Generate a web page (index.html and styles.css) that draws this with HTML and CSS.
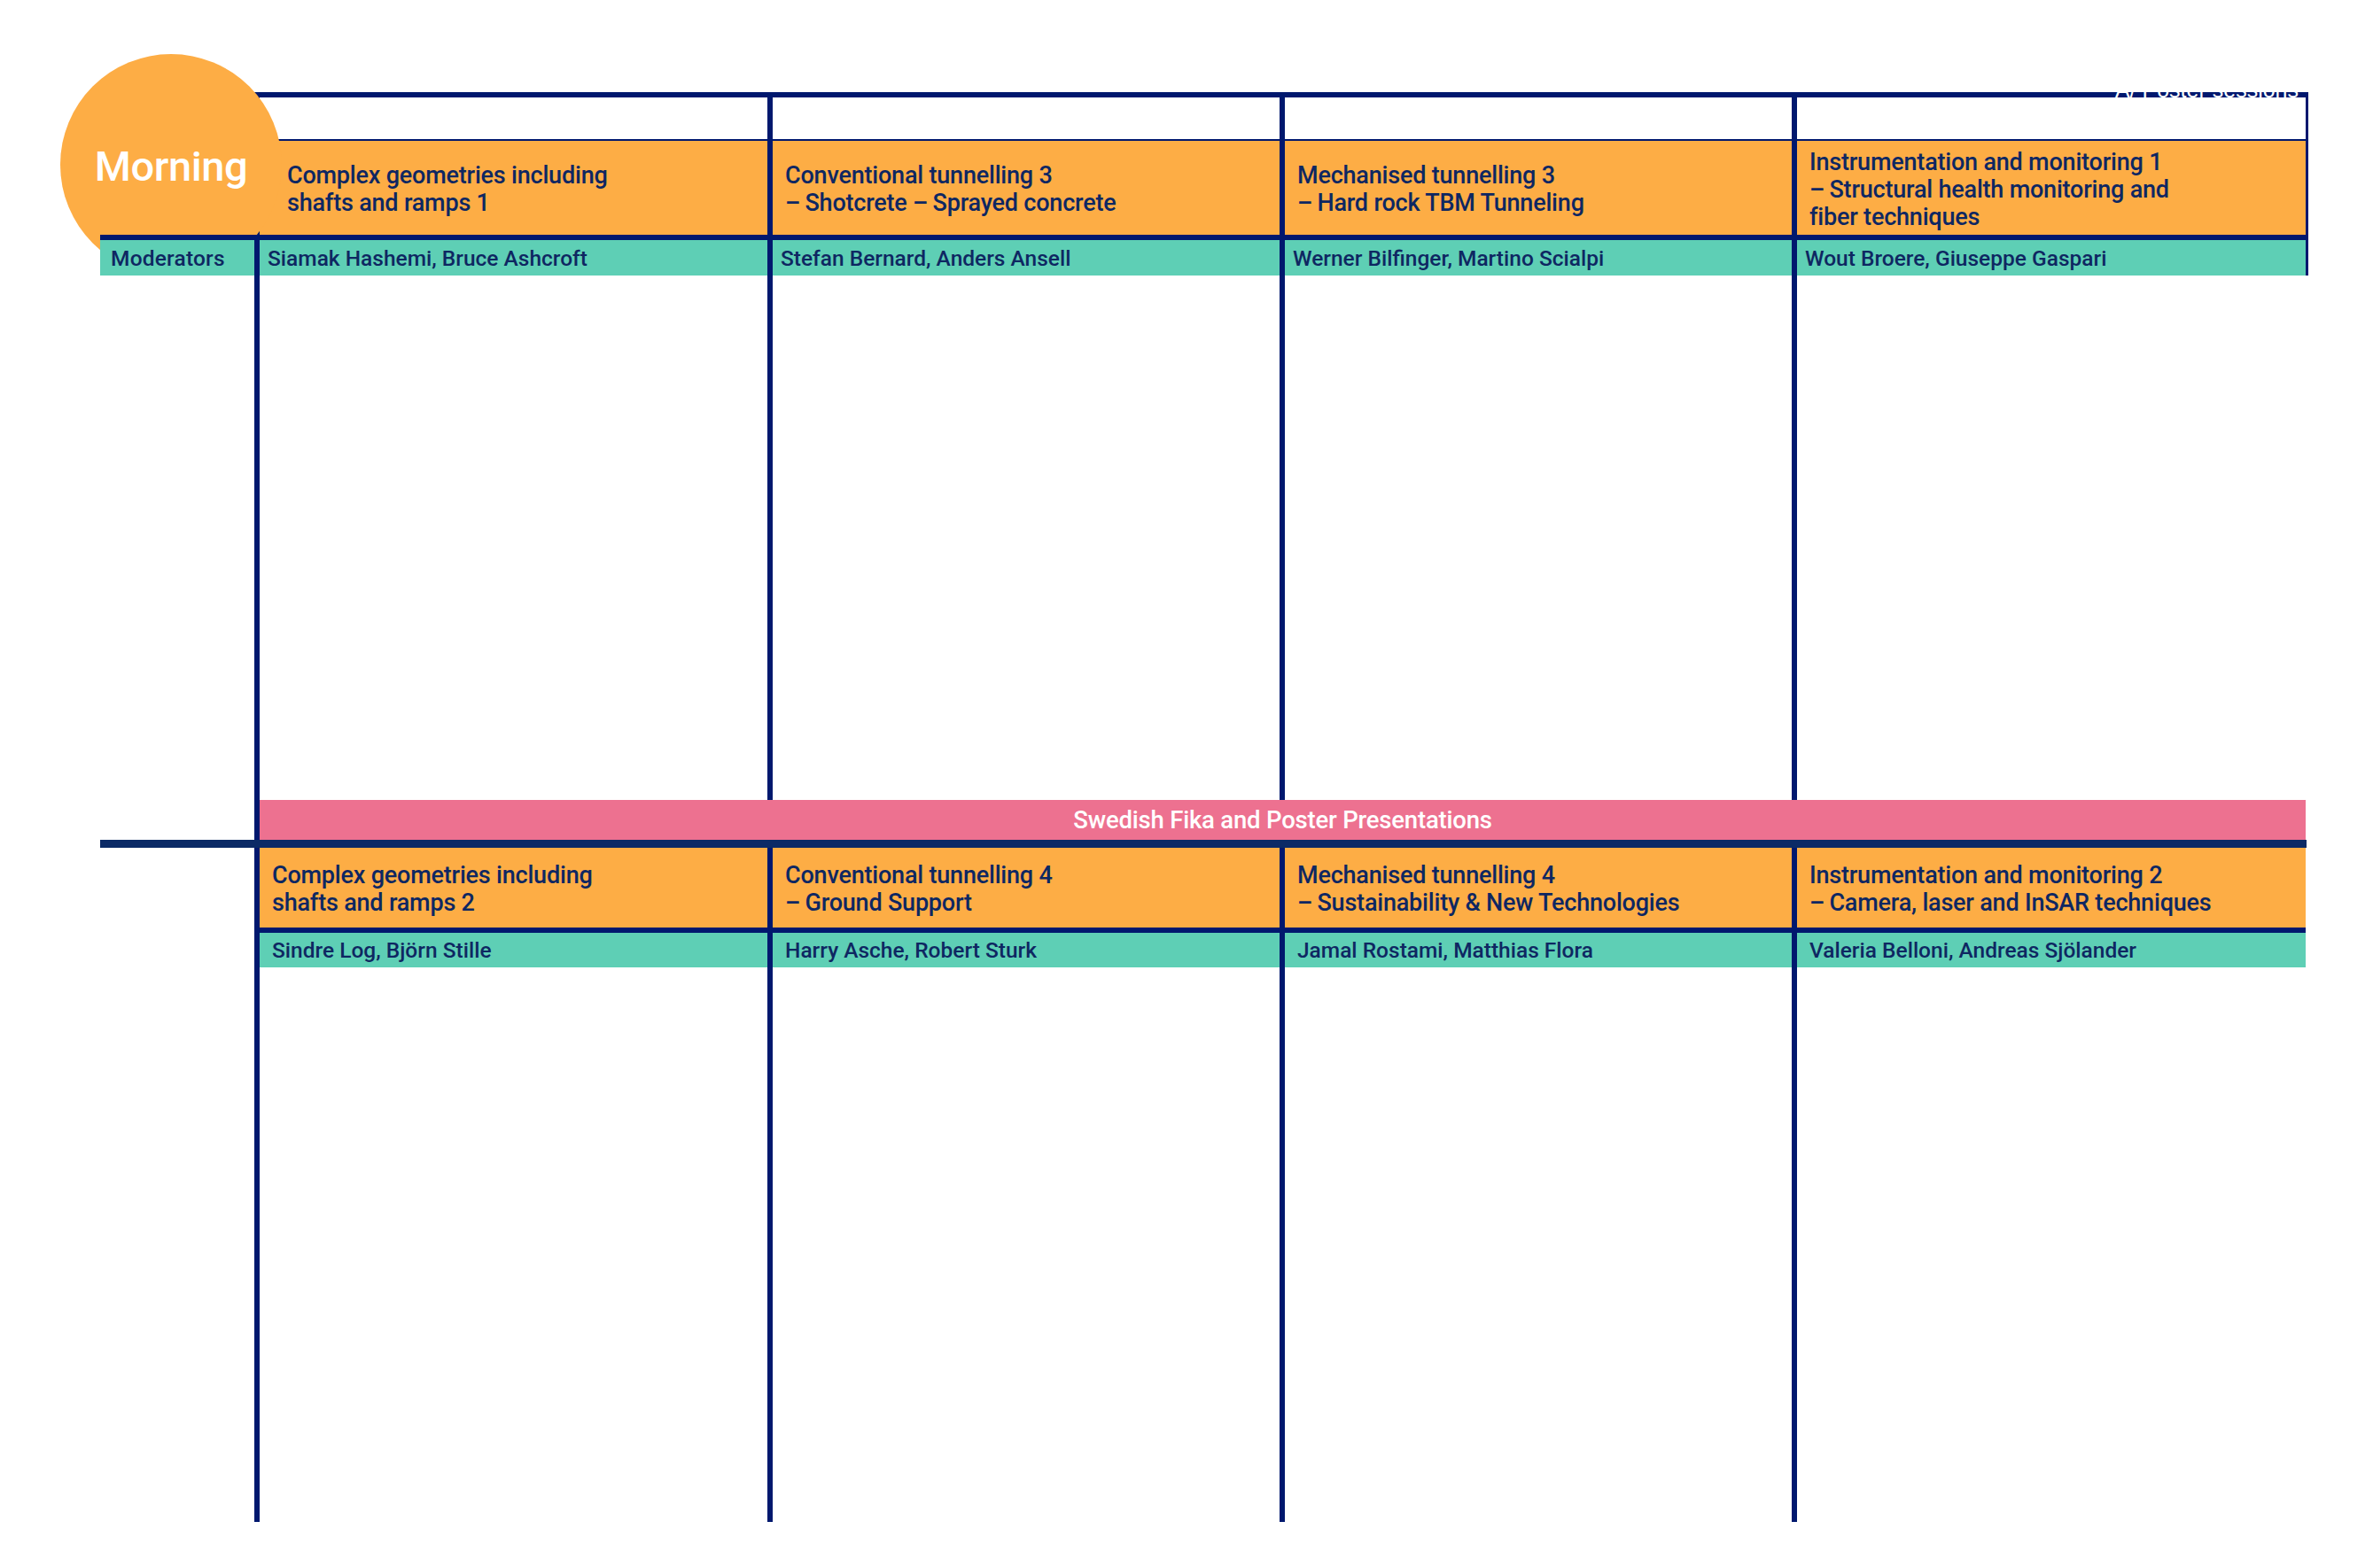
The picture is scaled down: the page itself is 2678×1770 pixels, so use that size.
FILE: index.html
```html
<!DOCTYPE html>
<html lang="en">
<head>
<meta charset="utf-8">
<title>Programme – Morning</title>
<link rel="stylesheet" href="styles.css">
</head>
<body>
<div class="page">
  <div class="badge"><span>Morning</span></div>

  <div class="rule-top"><span class="poster-tag">A/ Poster sessions</span></div>

  <div class="row grid-top blank">
    <div class="lead"></div>
    <div class="c"></div>
    <div class="c"></div>
    <div class="c"></div>
    <div class="c last"></div>
  </div>

  <div class="row grid-top head">
    <div class="lead"></div>
    <div class="c session first">Complex geometries including<br>shafts and ramps 1</div>
    <div class="c session">Conventional tunnelling 3<br>–&#8201;Shotcrete –&#8201;Sprayed concrete</div>
    <div class="c session">Mechanised tunnelling 3<br>–&#8201;Hard rock TBM Tunneling</div>
    <div class="c session last">Instrumentation and monitoring 1<br>–&#8201;Structural health monitoring and<br>fiber techniques</div>
  </div>

  <div class="rule-mid"></div>

  <div class="row grid-top mods">
    <div class="lead mod-label">Moderators</div>
    <div class="c mod">Siamak Hashemi, Bruce Ashcroft</div>
    <div class="c mod">Stefan Bernard, Anders Ansell</div>
    <div class="c mod">Werner Bilfinger, Martino Scialpi</div>
    <div class="c mod last">Wout Broere, Giuseppe Gaspari</div>
  </div>

  <div class="row grid-bottom body-top">
    <div class="lead"></div>
    <div class="c"></div>
    <div class="c"></div>
    <div class="c"></div>
    <div class="c"></div>
  </div>

  <div class="row grid-bottom break">
    <div class="lead"></div>
    <div class="fika">Swedish Fika and Poster Presentations</div>
  </div>

  <div class="rule-break"></div>

  <div class="row grid-bottom head2">
    <div class="lead"></div>
    <div class="c session">Complex geometries including<br>shafts and ramps 2</div>
    <div class="c session">Conventional tunnelling 4<br>–&#8201;Ground Support</div>
    <div class="c session">Mechanised tunnelling 4<br>–&#8201;Sustainability &amp; New Technologies</div>
    <div class="c session">Instrumentation and monitoring 2<br>–&#8201;Camera, laser and InSAR techniques</div>
  </div>

  <div class="rule-mid2"></div>

  <div class="row grid-bottom mods2">
    <div class="lead"></div>
    <div class="c mod">Sindre Log, Björn Stille</div>
    <div class="c mod">Harry Asche, Robert Sturk</div>
    <div class="c mod">Jamal Rostami, Matthias Flora</div>
    <div class="c mod">Valeria Belloni, Andreas Sjölander</div>
  </div>

  <div class="row grid-bottom body-bottom">
    <div class="lead"></div>
    <div class="c"></div>
    <div class="c"></div>
    <div class="c"></div>
    <div class="c"></div>
  </div>
</div>
</body>
</html>
```

FILE: styles.css
```css
* { box-sizing: border-box; }

html, body {
  margin: 0;
  padding: 0;
  background: #ffffff;
}

body {
  width: 2678px;
  height: 1770px;
  overflow: hidden;
  font-family: Roboto, "Liberation Sans", Arial, sans-serif;
  color: #0e2762;
}

.page {
  position: relative;
  padding: 104px 0 0 113px;
}

/* Orange "Morning" disc, lies over the header area */
.badge {
  position: absolute;
  left: 68px;
  top: 61px;
  width: 250px;
  height: 250px;
  border-radius: 50%;
  background: #fdad45;
  z-index: 1;
  display: flex;
  align-items: center;
  justify-content: center;
}

.badge span {
  color: #ffffff;
  font-weight: 500;
  font-size: 47px;
  letter-spacing: -0.4px;
  line-height: 1;
  margin-top: 2px;
}

.row {
  display: grid;
}

.grid-top {
  grid-template-columns: 174px 579px 578px 578px 583px;
}

.grid-bottom {
  grid-template-columns: 174px 579px 578px 578px 580px;
}

.c {
  border-left: 6px solid #00186e;
}

.c.last {
  border-right: 3px solid #00186e;
}

/* Top rule */
.rule-top {
  position: relative;
  margin-left: 174px;
  width: 2318px;
  height: 6px;
  background: #00186e;
}

.poster-tag {
  position: absolute;
  right: 11px;
  bottom: -4px;
  color: #ffffff;
  font-family: "Liberation Sans", Arial, sans-serif;
  font-size: 25px;
  line-height: 25px;
  white-space: nowrap;
}

.blank {
  height: 47px;
}

.head {
  height: 108px;
}

.head .c {
  border-top: 2px solid #00186e;
  background: #fdad45;
}

.session {
  display: flex;
  align-items: center;
  padding-left: 14px;
  padding-top: 4px;
  font-weight: 500;
  font-size: 27px;
  line-height: 31px;
  letter-spacing: -0.2px;
  white-space: nowrap;
}

.session.first {
  padding-left: 31px;
}

.rule-mid {
  position: relative;
  z-index: 2;
  width: 2492px;
  height: 6px;
  background: #00186e;
}

.mods {
  position: relative;
  z-index: 2;
  height: 40px;
}

.mods .c,
.mods2 .c {
  background: #5ecfb5;
}

.mod-label {
  background: #5ecfb5;
  padding-left: 12px;
  display: flex;
  align-items: center;
  font-weight: 500;
  font-size: 24.5px;
  letter-spacing: 0.2px;
}

.mod {
  display: flex;
  align-items: center;
  padding-left: 9px;
  font-weight: 500;
  font-size: 24.5px;
  letter-spacing: 0;
  white-space: nowrap;
}

.body-top {
  height: 592px;
}

.break {
  height: 45px;
}

.fika {
  grid-column: 2 / -1;
  border-left: 6px solid #00186e;
  background: #ed7190;
  color: #ffffff;
  display: flex;
  align-items: center;
  justify-content: center;
  font-weight: 500;
  font-size: 27.5px;
  letter-spacing: -0.2px;
}

.rule-break {
  width: 2490px;
  height: 9px;
  background: #0b2a66;
}

.head2 {
  height: 90px;
}

.head2 .c {
  background: #fdad45;
}

.rule-mid2 {
  margin-left: 174px;
  width: 2315px;
  height: 6px;
  background: #00186e;
}

.mods2 {
  height: 39px;
}

.mods2 .mod {
  padding-left: 14px;
}

.body-bottom {
  height: 626px;
}
```
